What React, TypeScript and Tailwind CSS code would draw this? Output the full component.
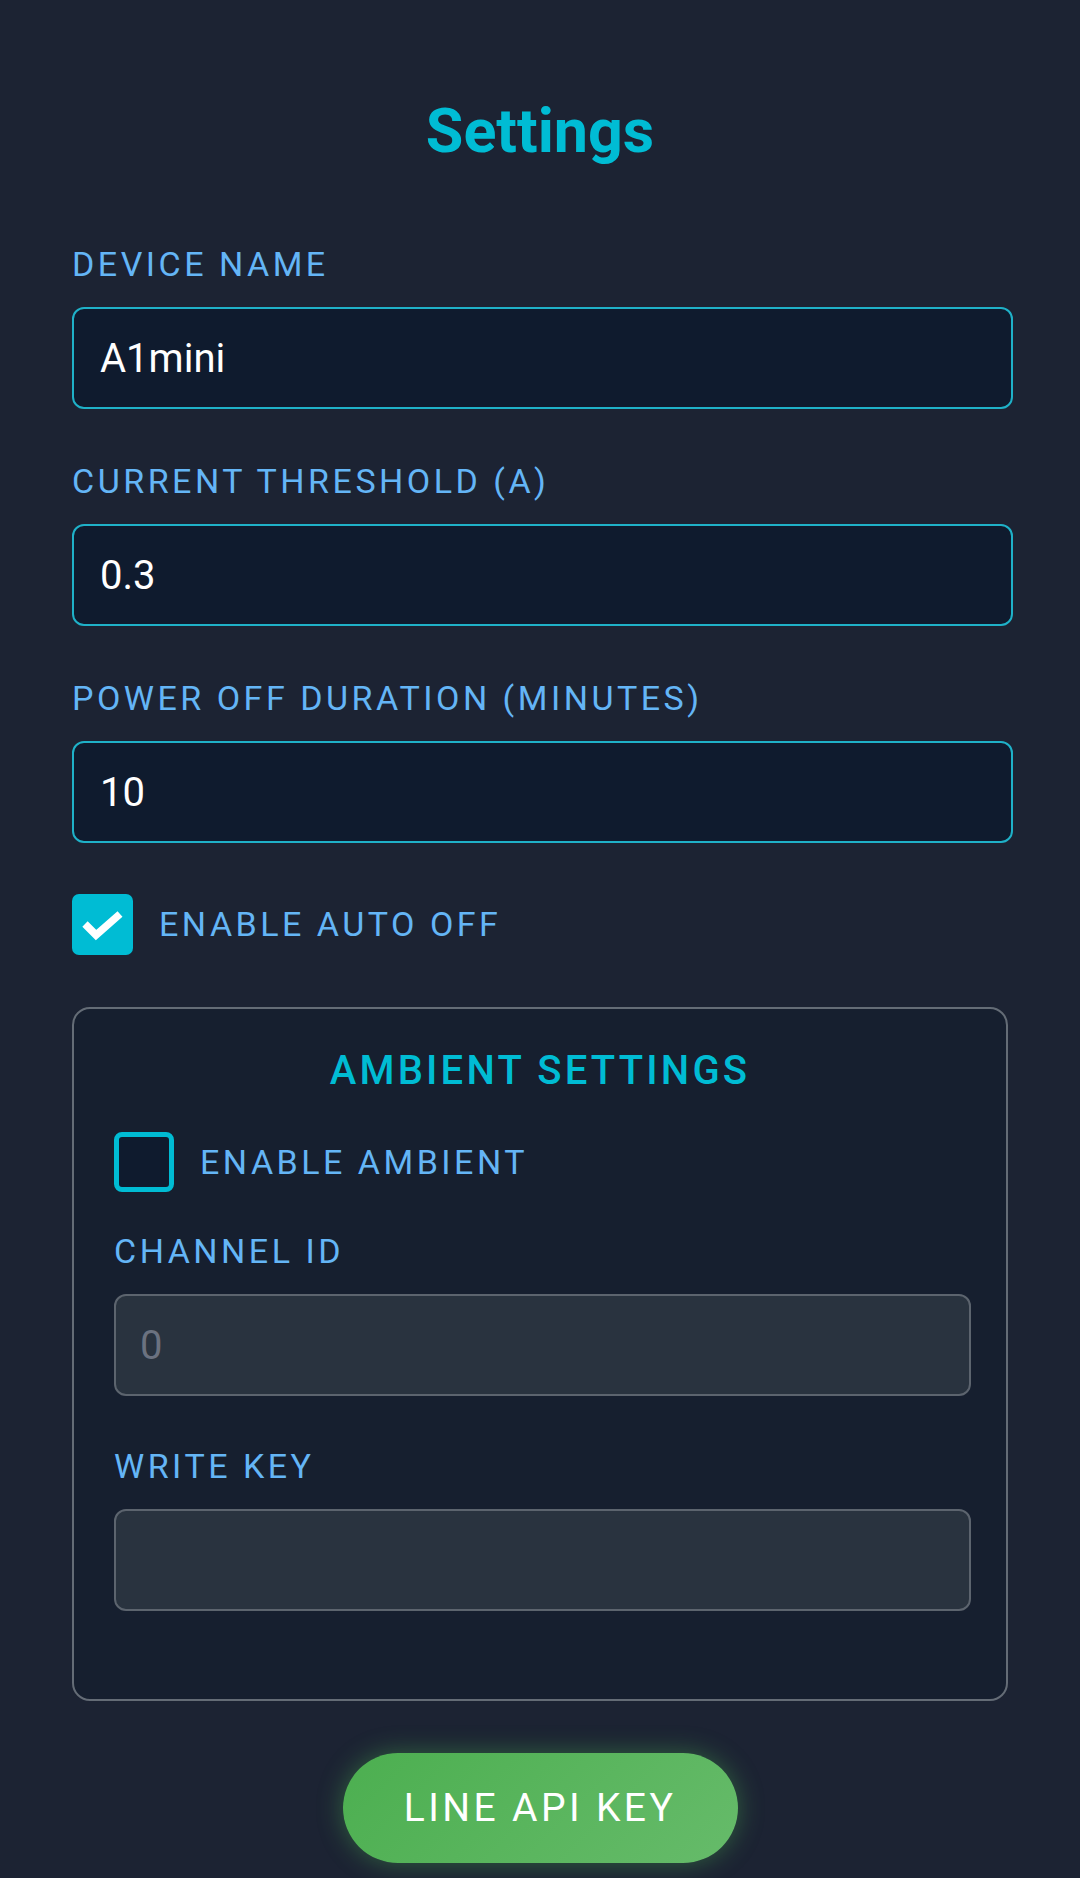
import type { ReactNode } from "react";

function FieldLabel({ children }: { children: ReactNode }) {
  return (
    <span className="block text-[34px] leading-[33px] tracking-[3.5px] text-[#64b5f6]">
      {children}
    </span>
  );
}

function Field({ label, value, disabled }: { label: string; value: string; disabled?: boolean }) {
  return (
    <label className="flex flex-col gap-[26px]">
      <FieldLabel>{label}</FieldLabel>
      <input
        defaultValue={value}
        disabled={disabled}
        className={
          disabled
            ? "h-[102px] w-[calc(100%+5px)] rounded-[12px] border-2 border-[#5c646e] bg-[#29333f] px-[24px] text-[40px] text-[#6b7280] outline-none"
            : "h-[102px] w-[calc(100%+5px)] rounded-[12px] border-[2.5px] border-[#1fb1c8] bg-[#0f1b2e] px-[26px] text-[40px] text-white outline-none"
        }
      />
    </label>
  );
}

function CheckRow({ label, checked }: { label: string; checked: boolean }) {
  return (
    <div className="flex items-center gap-[26px]">
      {checked ? (
        <span className="flex h-[61px] w-[61px] items-center justify-center rounded-[7px] bg-[#00bcd4]">
          <svg width="61" height="61" viewBox="0 0 61 61">
            <polyline
              points="13,30 24,41 48,20"
              fill="none"
              stroke="#fff"
              strokeWidth="7.5"
              strokeLinejoin="miter"
            />
          </svg>
        </span>
      ) : (
        <span className="h-[60px] w-[60px] rounded-[8px] border-[5px] border-[#00bcd4] bg-[#0f1b2e]" />
      )}
      <span className="text-[34px] leading-[33px] tracking-[3.5px] text-[#64b5f6]">{label}</span>
    </div>
  );
}

export default function App() {
  return (
    <div className="min-h-[1878px] bg-[#1c2333] px-[72px] pt-[100px] pb-[13px] font-[Roboto,sans-serif]">
      <h1 className="text-center text-[61px] leading-[63px] font-bold text-[#00bcd4]">Settings</h1>

      <div className="mt-[85px] flex flex-col gap-[56px]">
        <Field label="DEVICE NAME" value="A1mini" />
        <Field label="CURRENT THRESHOLD (A)" value="0.3" />
        <Field label="POWER OFF DURATION (MINUTES)" value="10" />
      </div>

      <div className="mt-[51px]">
        <CheckRow label="ENABLE AUTO OFF" checked />
      </div>

      {/* Ambient block */}
      <section className="mt-[52px] rounded-[18px] border-2 border-[#646c76] bg-[#161f2f] px-[40px] pt-[42px] pb-[88px]">
        <h2 className="text-center text-[40px] leading-[39px] font-medium tracking-[3.2px] text-[#00bcd4]">
          AMBIENT SETTINGS
        </h2>
        <div className="mt-[42px]">
          <CheckRow label="ENABLE AMBIENT" checked={false} />
        </div>
        <div className="mt-[43px] flex flex-col gap-[54px]">
          <Field label="CHANNEL ID" value="0" disabled />
          <Field label="WRITE KEY" value="" disabled />
        </div>
      </section>

      <div className="mt-[52px] flex justify-center">
        <button className="h-[110px] w-[395px] rounded-full bg-[linear-gradient(135deg,#4caf50,#66bb6a)] text-[39px] tracking-[3.4px] text-white shadow-[0_0_26px_rgba(76,175,80,0.45)]">
          LINE API KEY
        </button>
      </div>
    </div>
  );
}
